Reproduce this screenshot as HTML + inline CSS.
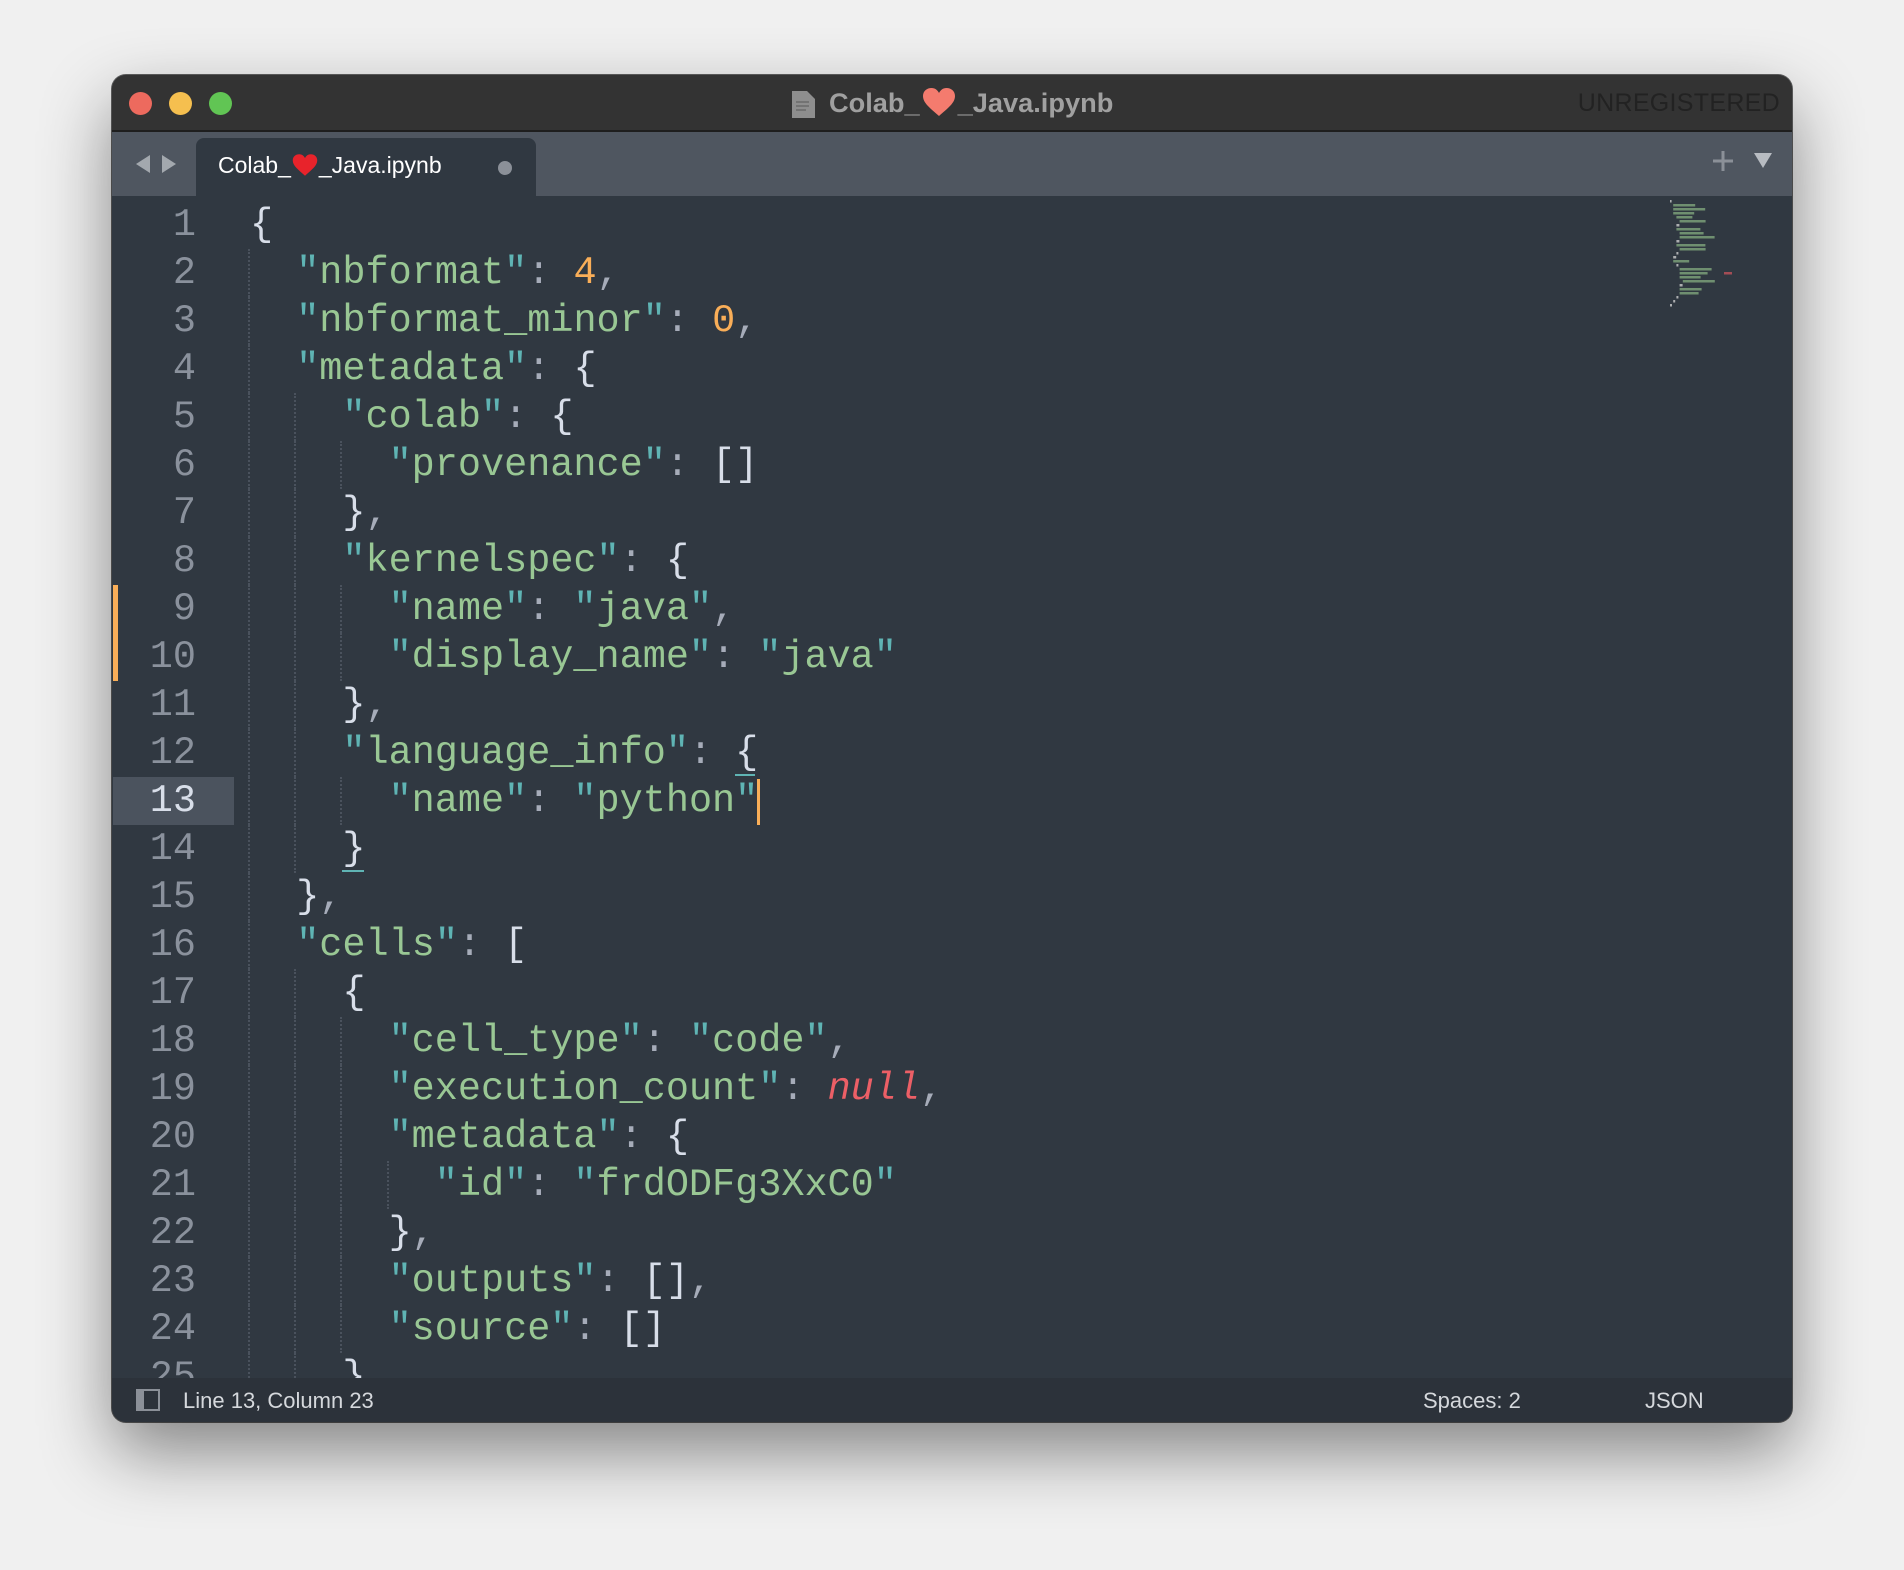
<!DOCTYPE html>
<html><head><meta charset="utf-8"><style>
*{margin:0;padding:0;box-sizing:border-box}
body{width:1904px;height:1570px;background:#f0f0f0;position:relative;overflow:hidden;font-family:"Liberation Sans",sans-serif}
.win{position:absolute;left:112px;top:75px;width:1680px;height:1347px;border-radius:14px;overflow:hidden;background:#303841;box-shadow:0 30px 70px rgba(0,0,0,.45),0 0 0 1px rgba(0,0,0,.6)}
.title{position:absolute;left:0;top:0;width:100%;height:57px;background:#333333;border-bottom:2px solid #1e1e1e}
.tl{position:absolute;top:17px;width:23px;height:23px;border-radius:50%}
.tabs{position:absolute;left:0;top:57px;width:100%;height:64px;background:#4f5660}
.tab{position:absolute;left:84px;top:6px;width:340px;height:58px;background:#303841;border-radius:8px 8px 0 0}
.ed{position:absolute;left:0;top:121px;width:100%;height:1182px;background:#303841;overflow:hidden}
.status{position:absolute;left:0;top:1303px;width:100%;height:44px;background:#2c323a;color:#d5d8dc;font-size:22px}
.ln{position:absolute;left:0;width:84px;text-align:right;font-family:"Liberation Mono",monospace;font-size:38.5px;color:#8a919c;height:48px;line-height:48px}
.code{position:absolute;left:138px;font-family:"Liberation Mono",monospace;font-size:38.5px;height:48px;line-height:48px;white-space:pre;color:#d8dee9}
.g{display:inline-block;width:46.2px;height:48px;border-left:2px dotted #4a525d;vertical-align:top;margin-left:-2px;margin-right:2px}
.q{color:#5fb4b4}.s{color:#99c794}.n{color:#f9ae58}.p{color:#a6acb9}.w{color:#d8dee9}.r{color:#ec5f66;font-style:italic}
</style></head><body>
<div class="win">
 <div class="title">
  <div class="tl" style="left:17px;background:#ed6a5e"></div>
  <div class="tl" style="left:57px;background:#f5bf4f"></div>
  <div class="tl" style="left:97px;background:#61c554"></div>
  <svg style="position:absolute;left:680px;top:16px" width="23" height="27" viewBox="0 0 23 27"><path d="M0 0h15l8 8v19H0z" fill="#8e8e8e"/><path d="M4 11h13M4 15h13M4 19h10" stroke="#6a6a6a" stroke-width="1.5"/></svg>
  <div style="position:absolute;left:717px;top:12px;font-size:27.2px;font-weight:bold;color:#a0a0a0;white-space:nowrap">Colab_<svg width="34" height="30" viewBox="0 0 34 30" style="vertical-align:-5px;margin:0 2px"><path d="M17 29C8 21 1 16 1 9 1 4 5 1 9.5 1 13 1 15.5 3 17 6 18.5 3 21 1 24.5 1 29 1 33 4 33 9 33 16 26 21 17 29z" fill="#f47b6e"/></svg>_Java.ipynb</div>
  <div style="position:absolute;right:12px;top:14px;font-size:25px;color:#222;letter-spacing:.3px">UNREGISTERED</div>
 </div>
 <div class="tabs">
  <svg style="position:absolute;left:24px;top:23px" width="40" height="18" viewBox="0 0 40 18"><path d="M14 0v18L0 9z" fill="#a3a8ae"/><path d="M26 0v18l14-9z" fill="#a3a8ae"/></svg>
  <div class="tab">
   <div style="position:absolute;left:22px;top:14px;font-size:23px;color:#fff;white-space:nowrap">Colab_<svg width="26" height="24" viewBox="0 0 34 30" style="vertical-align:-4px;margin:0 1px"><path d="M17 29C8 21 1 16 1 9 1 4 5 1 9.5 1 13 1 15.5 3 17 6 18.5 3 21 1 24.5 1 29 1 33 4 33 9 33 16 26 21 17 29z" fill="#e8232b"/></svg>_Java.ipynb</div>
   <div style="position:absolute;left:302px;top:23px;width:14px;height:14px;border-radius:50%;background:#8b9098"></div>
  </div>
  <svg style="position:absolute;left:1600px;top:17px" width="70" height="24" viewBox="0 0 70 24"><path d="M11 2v20M1 12h20" stroke="#8b9098" stroke-width="3"/><path d="M42 4h18l-9 15z" fill="#b8bcc2"/></svg>
 </div>
 <div class="ed">
  <div style="position:absolute;left:1px;top:581px;width:121px;height:48px;background:#4b535e"></div>
  <div style="position:absolute;left:1px;top:389px;width:5px;height:96px;background:#f9ae58"></div>
  <div style="position:absolute;left:645px;top:583px;width:3px;height:46px;background:#f9ae58"></div>
  <div style="position:absolute;left:623px;top:578px;width:20px;height:2px;background:#5fb4b4"></div>
  <div style="position:absolute;left:230px;top:674px;width:22px;height:2px;background:#5fb4b4"></div>

  <div class="ln" style="top:5px">1</div><div class="code" style="top:5px"><span class="w">{</span></div>
  <div class="ln" style="top:53px">2</div><div class="code" style="top:53px"><span class="g"></span><span class="q">"</span><span class="s">nbformat</span><span class="q">"</span><span class="p">: </span><span class="n">4</span><span class="p">,</span></div>
  <div class="ln" style="top:101px">3</div><div class="code" style="top:101px"><span class="g"></span><span class="q">"</span><span class="s">nbformat_minor</span><span class="q">"</span><span class="p">: </span><span class="n">0</span><span class="p">,</span></div>
  <div class="ln" style="top:149px">4</div><div class="code" style="top:149px"><span class="g"></span><span class="q">"</span><span class="s">metadata</span><span class="q">"</span><span class="p">: </span>{</div>
  <div class="ln" style="top:197px">5</div><div class="code" style="top:197px"><span class="g"></span><span class="g"></span><span class="q">"</span><span class="s">colab</span><span class="q">"</span><span class="p">: </span>{</div>
  <div class="ln" style="top:245px">6</div><div class="code" style="top:245px"><span class="g"></span><span class="g"></span><span class="g"></span><span class="q">"</span><span class="s">provenance</span><span class="q">"</span><span class="p">: </span>[]</div>
  <div class="ln" style="top:293px">7</div><div class="code" style="top:293px"><span class="g"></span><span class="g"></span>}<span class="p">,</span></div>
  <div class="ln" style="top:341px">8</div><div class="code" style="top:341px"><span class="g"></span><span class="g"></span><span class="q">"</span><span class="s">kernelspec</span><span class="q">"</span><span class="p">: </span>{</div>
  <div class="ln" style="top:389px">9</div><div class="code" style="top:389px"><span class="g"></span><span class="g"></span><span class="g"></span><span class="q">"</span><span class="s">name</span><span class="q">"</span><span class="p">: </span><span class="q">"</span><span class="s">java</span><span class="q">"</span><span class="p">,</span></div>
  <div class="ln" style="top:437px">10</div><div class="code" style="top:437px"><span class="g"></span><span class="g"></span><span class="g"></span><span class="q">"</span><span class="s">display_name</span><span class="q">"</span><span class="p">: </span><span class="q">"</span><span class="s">java</span><span class="q">"</span></div>
  <div class="ln" style="top:485px">11</div><div class="code" style="top:485px"><span class="g"></span><span class="g"></span>}<span class="p">,</span></div>
  <div class="ln" style="top:533px">12</div><div class="code" style="top:533px"><span class="g"></span><span class="g"></span><span class="q">"</span><span class="s">language_info</span><span class="q">"</span><span class="p">: </span>{</div>
  <div class="ln" style="top:581px;color:#d8dee9">13</div><div class="code" style="top:581px"><span class="g"></span><span class="g"></span><span class="g"></span><span class="q">"</span><span class="s">name</span><span class="q">"</span><span class="p">: </span><span class="q">"</span><span class="s">python</span><span class="q">"</span></div>
  <div class="ln" style="top:629px">14</div><div class="code" style="top:629px"><span class="g"></span><span class="g"></span>}</div>
  <div class="ln" style="top:677px">15</div><div class="code" style="top:677px"><span class="g"></span>}<span class="p">,</span></div>
  <div class="ln" style="top:725px">16</div><div class="code" style="top:725px"><span class="g"></span><span class="q">"</span><span class="s">cells</span><span class="q">"</span><span class="p">: </span>[</div>
  <div class="ln" style="top:773px">17</div><div class="code" style="top:773px"><span class="g"></span><span class="g"></span>{</div>
  <div class="ln" style="top:821px">18</div><div class="code" style="top:821px"><span class="g"></span><span class="g"></span><span class="g"></span><span class="q">"</span><span class="s">cell_type</span><span class="q">"</span><span class="p">: </span><span class="q">"</span><span class="s">code</span><span class="q">"</span><span class="p">,</span></div>
  <div class="ln" style="top:869px">19</div><div class="code" style="top:869px"><span class="g"></span><span class="g"></span><span class="g"></span><span class="q">"</span><span class="s">execution_count</span><span class="q">"</span><span class="p">: </span><span class="r">null</span><span class="p">,</span></div>
  <div class="ln" style="top:917px">20</div><div class="code" style="top:917px"><span class="g"></span><span class="g"></span><span class="g"></span><span class="q">"</span><span class="s">metadata</span><span class="q">"</span><span class="p">: </span>{</div>
  <div class="ln" style="top:965px">21</div><div class="code" style="top:965px"><span class="g"></span><span class="g"></span><span class="g"></span><span class="g"></span><span class="q">"</span><span class="s">id</span><span class="q">"</span><span class="p">: </span><span class="q">"</span><span class="s">frdODFg3XxC0</span><span class="q">"</span></div>
  <div class="ln" style="top:1013px">22</div><div class="code" style="top:1013px"><span class="g"></span><span class="g"></span><span class="g"></span>}<span class="p">,</span></div>
  <div class="ln" style="top:1061px">23</div><div class="code" style="top:1061px"><span class="g"></span><span class="g"></span><span class="g"></span><span class="q">"</span><span class="s">outputs</span><span class="q">"</span><span class="p">: </span>[]<span class="p">,</span></div>
  <div class="ln" style="top:1109px">24</div><div class="code" style="top:1109px"><span class="g"></span><span class="g"></span><span class="g"></span><span class="q">"</span><span class="s">source</span><span class="q">"</span><span class="p">: </span>[]</div>
  <div class="ln" style="top:1157px">25</div><div class="code" style="top:1157px"><span class="g"></span><span class="g"></span>}</div>

  <svg style="position:absolute;left:1558px;top:4px" width="80" height="120">
   <g fill="#7fa57c" opacity=".8">
    <rect x="0" y="0" width="1.6" height="2.5" fill="#ccc"/>
    <rect x="3.2" y="4" width="22" height="2.5"/>
    <rect x="3.2" y="8" width="32" height="2.5"/>
    <rect x="3.2" y="12" width="21" height="2.5"/>
    <rect x="6.4" y="16" width="16" height="2.5"/>
    <rect x="9.6" y="20" width="26" height="2.5"/>
    <rect x="6.4" y="24" width="3" height="2.5" fill="#ccc"/>
    <rect x="6.4" y="28" width="24" height="2.5"/>
    <rect x="9.6" y="32" width="24" height="2.5"/>
    <rect x="9.6" y="36" width="35" height="2.5"/>
    <rect x="6.4" y="40" width="3" height="2.5" fill="#ccc"/>
    <rect x="6.4" y="44" width="29" height="2.5"/>
    <rect x="9.6" y="48" width="26" height="2.5"/>
    <rect x="6.4" y="52" width="2" height="2.5" fill="#ccc"/>
    <rect x="3.2" y="56" width="3" height="2.5" fill="#ccc"/>
    <rect x="3.2" y="60" width="16" height="2.5"/>
    <rect x="6.4" y="64" width="2" height="2.5" fill="#ccc"/>
    <rect x="9.6" y="68" width="32" height="2.5"/>
    <rect x="9.6" y="72" width="28" height="2.5"/>
    <rect x="54" y="72" width="8" height="2.5" fill="#c0535a"/>
    <rect x="9.6" y="76" width="21" height="2.5"/>
    <rect x="12.8" y="80" width="32" height="2.5"/>
    <rect x="9.6" y="84" width="3" height="2.5" fill="#ccc"/>
    <rect x="9.6" y="88" width="22" height="2.5"/>
    <rect x="9.6" y="92" width="19" height="2.5"/>
    <rect x="6.4" y="96" width="2" height="2.5" fill="#ccc"/>
    <rect x="3.2" y="100" width="2" height="2.5" fill="#ccc"/>
    <rect x="0" y="104" width="2" height="2.5" fill="#ccc"/>
   </g>
  </svg>
 </div>
 <div class="status">
  <div style="position:absolute;left:24px;top:11px;width:24px;height:22px;border:2px solid #8b9098;border-left-width:8px"></div>
  <div style="position:absolute;left:71px;top:10px">Line 13, Column 23</div>
  <div style="position:absolute;left:1311px;top:10px">Spaces: 2</div>
  <div style="position:absolute;left:1533px;top:10px">JSON</div>
 </div>
</div>
</body></html>
